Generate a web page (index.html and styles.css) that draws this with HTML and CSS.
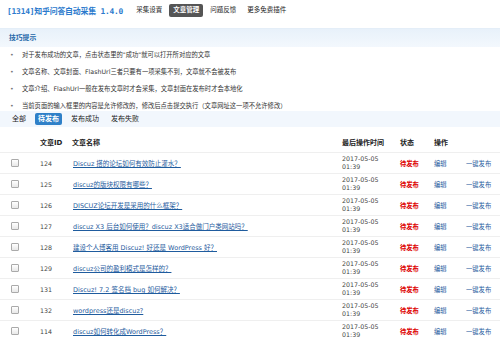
FILE: index.html
```
<!DOCTYPE html>
<html lang="zh-CN">
<head>
    <meta charset="UTF-8">
    <title>知乎问答自动采集</title>
    <link rel="stylesheet" href="styles.css">
</head>
<body>
    <div class="topbar">
        <h3 class="plugin-title">[1314]知乎问答自动采集 1.4.0</h3>
        <ul class="tabs">
            <li>采集设置</li>
            <li class="on">文章管理</li>
            <li>问题反馈</li>
            <li>更多免费插件</li>
        </ul>
    </div>

    <div class="tips-head">技巧提示</div>
    <ul class="tips">
        <li>对于发布成功的文章，点击状态里的"成功"就可以打开所对应的文章</li>
        <li>文章名称、文章封面、FlashUrl三者只要有一项采集不到，文章就不会被发布</li>
        <li>文章介绍、FlashUrl一般在发布文章时才会采集，文章封面在发布时才会本地化</li>
        <li>当前页面的输入框里的内容是允许修改的，修改后点击提交执行（文章网址这一项不允许修改）</li>
    </ul>

    <div class="filter">
        <a>全部</a>
        <a class="on">待发布</a>
        <a>发布成功</a>
        <a>发布失败</a>
    </div>

    <table class="list">
        <colgroup>
            <col class="c-cb"><col class="c-id"><col class="c-name"><col class="c-time"><col class="c-state"><col class="c-edit"><col class="c-pub">
        </colgroup>
        <thead>
            <tr>
                <th></th>
                <th>文章ID</th>
                <th>文章名称</th>
                <th>最后操作时间</th>
                <th>状态</th>
                <th>操作</th>
                <th></th>
            </tr>
        </thead>
        <tbody id="rows"></tbody>
    </table>

    <script>
        const articles = [
            [124, 'Discuz 搭的论坛如何有效防止灌水？'],
            [125, 'discuz的版块权限有哪些？'],
            [126, 'DISCUZ论坛开发是采用的什么框架？'],
            [127, 'discuz X3 后台如何使用？discuz X3适合做门户类网站吗？'],
            [128, '建设个人博客用 Discuz! 好还是 WordPress 好？'],
            [129, 'discuz公司的盈利模式是怎样的？'],
            [131, 'Discuz! 7.2 签名档 bug 如何解决？'],
            [132, 'wordpress还是discuz?'],
            [114, 'discuz如何转化成WordPress？']
        ];

        const tbody = document.getElementById('rows');
        articles.forEach(a => {
            const tr = document.createElement('tr');
            tr.innerHTML =
                '<td><input type="checkbox" class="cb"></td>' +
                '<td class="num">' + a[0] + '</td>' +
                '<td><a class="title-link">' + a[1] + '</a></td>' +
                '<td class="time">2017-05-05<br>01:39</td>' +
                '<td class="state">待发布</td>' +
                '<td><a class="op">编辑</a></td>' +
                '<td><a class="op">一键发布</a></td>';
            tbody.appendChild(tr);
        });
    </script>
</body>
</html>
```
FILE: styles.css
```
body {
    margin: 0;
    width: 500px;
    background: #fff;
    color: #333;
    font-family: "DejaVu Sans", "Noto Sans CJK SC", sans-serif;
    font-size: 6.3px;
}
a {
    color: #1f5c9e;
}
.topbar {
    display: flex;
    align-items: center;
    height: 20px;
    padding: 0 0 0 7px;
    margin-bottom: 8px;
}
.plugin-title {
    margin: 0;
    font-family: "DejaVu Sans Mono", "Noto Sans CJK SC", monospace;
    font-size: 7.9px;
    font-weight: bold;
    color: #2b7acd;
    letter-spacing: -0.2px;
}
.tabs {
    display: flex;
    gap: 3px;
    list-style: none;
    margin: 0 0 0 9px;
    padding: 0;
}
.tabs li {
    padding: 2px 4px;
    font-size: 6.5px;
    line-height: 9px;
    color: #222;
    border-radius: 2px;
}
.tabs li.on {
    background: #555;
    color: #fff;
    font-weight: bold;
}
.tips-head {
    height: 18px;
    line-height: 18px;
    padding-left: 9px;
    background: linear-gradient(#e8f1fa, #f3f8fd);
    border-top: 1px solid #e4eef8;
    color: #2366a8;
    font-weight: bold;
    font-size: 6.8px;
}
.tips {
    display: flex;
    flex-direction: column;
    gap: 7.3px;
    list-style: none;
    margin: 0;
    padding: 2.5px 0 0 10px;
}
.tips li {
    line-height: 10px;
    color: #333;
}
.tips li::before {
    content: "•";
    display: inline-block;
    width: 12px;
    color: #777;
}
.filter {
    display: flex;
    align-items: center;
    gap: 6px;
    height: 16px;
    padding-left: 9px;
    background: #f2f7fd;
    margin-bottom: 4px;
    font-size: 7px;
}
.filter a {
    color: #222;
    padding: 2px 3px;
    line-height: 8px;
    border-radius: 2px;
}
.filter a.on {
    background: #2f80c8;
    color: #fff;
    font-weight: bold;
}
.list {
    width: 500px;
    border-collapse: collapse;
    table-layout: fixed;
}
.c-cb { width: 40px; }
.c-id { width: 32px; }
.c-name { width: 270px; }
.c-time { width: 58px; }
.c-state { width: 34px; }
.c-edit { width: 32px; }
.c-pub { width: 34px; }
.list th {
    height: 21px;
    padding: 0;
    text-align: left;
    font-weight: bold;
    font-size: 7px;
    color: #222;
}
.list td {
    height: 20px;
    padding: 0;
    border-top: 1px solid #efefef;
    vertical-align: middle;
    color: #444;
}
.list td:first-child {
    padding-left: 11px;
}
.cb {
    appearance: none;
    display: block;
    width: 8px;
    height: 8px;
    margin: 0;
    border: 1px solid #aaa;
    border-radius: 1px;
    background: linear-gradient(#fff, #e8e8e8);
}
.num {
    padding-left: 1px;
}
.title-link {
    text-decoration: underline;
    font-size: 6.5px;
    margin-left: 1px;
}
.time {
    line-height: 8.5px;
    color: #555;
}
.list td.state {
    color: #d00;
    font-weight: bold;
}
```
